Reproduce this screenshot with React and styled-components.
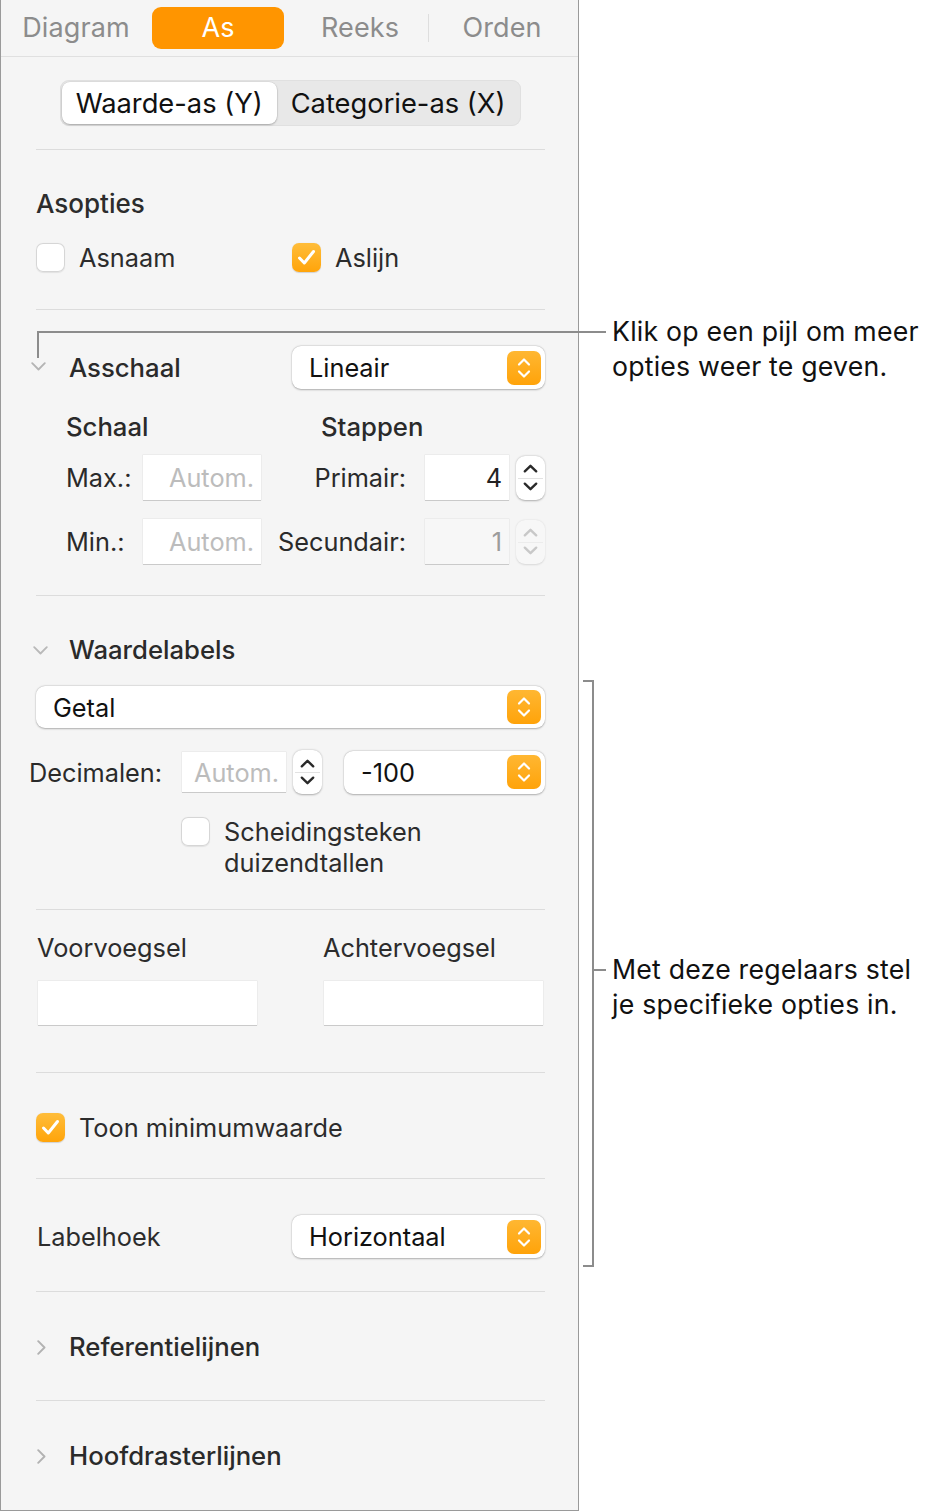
import React from "react";
import styled, { createGlobalStyle } from "styled-components";

const Global = createGlobalStyle`
  html, body { margin: 0; padding: 0; background: #ffffff; }
  body { font-family: Inter, "Noto Sans", "Liberation Sans", sans-serif; -webkit-font-smoothing: antialiased; }
  * { box-sizing: border-box; }
`;

const Page = styled.div`
  position: relative;
  width: 935px;
  height: 1511px;
  display: flex;
  align-items: flex-start;
`;

const Panel = styled.div`
  width: 579px;
  height: 1511px;
  background: #f5f5f5;
  border: 1.5px solid #9a9a9a;
  border-top: none;
  display: flex;
  flex-direction: column;
  color: #2a2a2a;
`;

const TabBar = styled.div`
  height: 57px;
  flex: none;
  display: grid;
  grid-template-columns: repeat(4, 1fr);
  padding: 0 5px 0 4px;
  border-bottom: 1px solid #e0e0e0;
  align-items: center;
`;

const Tab = styled.div`
  position: relative;
  height: 42px;
  margin: 0 5px 1px;
  border-radius: 9px;
  display: flex;
  align-items: center;
  justify-content: center;
  font-size: 27px;
  letter-spacing: 0.1px;
  color: ${(p) => (p.$active ? "#ffffff" : "#8c8c8c")};
  background: ${(p) => (p.$active ? "#ff9500" : "transparent")};
  ${(p) =>
    p.$sep &&
    `&::before { content: ""; position: absolute; left: -8px; top: 7px; bottom: 7px; width: 1px; background: #dedede; }`}
`;

const SegWrap = styled.div`
  display: flex;
  justify-content: center;
  padding: 23px 0 23px;
  border-bottom: 1px solid #dcdcdc;
  margin: 0 33px 0 35px;
`;

const Segmented = styled.div`
  display: flex;
  height: 46px;
  padding: 2px;
  border-radius: 9px;
  background: #e8e8e8;
  box-shadow: inset 0 0 0 1px #e0e0e0;
`;

const Segment = styled.div`
  display: flex;
  align-items: center;
  padding: 0 14px;
  border-radius: 8px;
  font-size: 27.3px;
  color: #111;
  background: ${(p) => (p.$active ? "#ffffff" : "transparent")};
  box-shadow: ${(p) => (p.$active ? "0 1px 2px rgba(0,0,0,0.25), 0 0 0 0.5px rgba(0,0,0,0.08)" : "none")};
`;

const Section = styled.div`
  margin: 0 33px 0 35px;
  padding: ${(p) => p.$pad || "36px 0 34px"};
  border-bottom: ${(p) => (p.$last ? "none" : "1px solid #dcdcdc")};
  display: flex;
  flex-direction: column;
  gap: ${(p) => p.$gap || "0px"};
`;

const Title = styled.div`
  font-size: 26px;
  line-height: 30px;
  font-weight: 500;
  color: #2c2c2c;
`;

const Row = styled.div`
  display: flex;
  align-items: center;
  justify-content: ${(p) => p.$justify || "flex-start"};
  min-height: ${(p) => p.$h || "30px"};
  margin-top: ${(p) => p.$mt || "0px"};
`;

const CheckGroup = styled.label`
  display: flex;
  align-items: ${(p) => (p.$top ? "flex-start" : "center")};
  gap: 14px;
  width: ${(p) => p.$w || "auto"};
  margin-left: ${(p) => p.$ml || "0px"};
  margin-top: ${(p) => p.$mt || "0px"};
  font-size: 25.3px;
  line-height: 31px;
  color: #2c2c2c;
`;

const Box = styled.span`
  flex: none;
  width: 29px;
  height: 29px;
  border-radius: 7px;
  display: flex;
  align-items: center;
  justify-content: center;
  margin-top: ${(p) => (p.$top ? "1px" : "0")};
  background: ${(p) => (p.$on ? "linear-gradient(#ffbd3a, #ffa40a)" : "#ffffff")};
  box-shadow: ${(p) =>
    p.$on ? "0 0.5px 1px rgba(0,0,0,0.15)" : "inset 0 0 0 1px #d6d6d6, 0 0.5px 1px rgba(0,0,0,0.08)"};
`;

const Chevron = styled.span`
  width: 33px;
  flex: none;
  display: flex;
  align-items: center;
  justify-content: flex-start;
  margin-left: ${(p) => p.$ml || "0px"};
  margin-right: ${(p) => p.$mr || "0px"};
`;

const Disclosure = styled.div`
  display: flex;
  align-items: center;
  font-size: 25.7px;
  line-height: 30px;
  font-weight: 500;
  color: #2a2a2a;
`;

const Popup = styled.div`
  width: ${(p) => p.$w || "100%"};
  height: ${(p) => p.$h || "43px"};
  border-radius: 9px;
  background: #ffffff;
  box-shadow: 0 0.5px 2px rgba(0, 0, 0, 0.28), 0 0 0 0.5px rgba(0, 0, 0, 0.05);
  display: flex;
  align-items: center;
  justify-content: space-between;
  padding: 0 4px 0 17px;
  font-size: 25.3px;
  color: #111;
`;

const PopupArrows = styled.span`
  width: 34px;
  height: 34px;
  border-radius: 7px;
  background: linear-gradient(#ffb732, #ffa30a);
  display: flex;
  align-items: center;
  justify-content: center;
`;

const ScaleGrid = styled.div`
  display: grid;
  grid-template-columns: 77px 118px 1fr 84px 36px;
  align-items: center;
  padding-left: 30px;
  row-gap: ${(p) => p.$rg || "19px"};
  margin-top: ${(p) => p.$mt || "0px"};
`;

const SubHead = styled.div`
  font-size: 25.7px;
  line-height: 30px;
  font-weight: 500;
  color: #2a2a2a;
  grid-column: ${(p) => p.$col};
  padding-left: ${(p) => p.$pl || "0px"};
`;

const FieldLabel = styled.div`
  font-size: 25.3px;
  color: #2a2a2a;
  text-align: ${(p) => (p.$right ? "right" : "left")};
  padding-right: ${(p) => (p.$right ? "19px" : "0")};
  white-space: nowrap;
`;

const Field = styled.div`
  height: ${(p) => p.$h || "45px"};
  width: ${(p) => p.$w || "auto"};
  background: ${(p) => (p.$disabled ? "#f7f7f7" : "#ffffff")};
  box-shadow: 0 1px 0 rgba(0,0,0,0.14), 0 0 0 0.5px rgba(0,0,0,0.07);
  display: flex;
  align-items: center;
  justify-content: flex-end;
  padding-right: 7px;
  font-size: 25.3px;
  color: ${(p) => (p.$placeholder ? "#bcbcbc" : p.$disabled ? "#9c9c9c" : "#222")};
  margin-left: ${(p) => p.$ml || "0px"};
`;

const Stepper = styled.div`
  justify-self: end;
  width: 29px;
  height: 44px;
  border-radius: 9px;
  background: ${(p) => (p.$disabled ? "#f7f7f7" : "#ffffff")};
  box-shadow: 0 0.5px 2px rgba(0, 0, 0, ${(p) => (p.$disabled ? "0.12" : "0.3")});
  display: flex;
  flex-direction: column;
  align-items: center;
  justify-content: space-evenly;
  position: relative;
  &::after {
    content: "";
    position: absolute;
    left: 2px;
    right: 2px;
    top: 50%;
    height: 1px;
    background: ${(p) => (p.$disabled ? "#ececec" : "#e2e2e2")};
  }
`;

const DecRow = styled.div`
  display: grid;
  grid-template-columns: 153px 104px 6px 30px 22px 1fr;
  align-items: center;
  margin-left: -7px;
  margin-top: 1px;
`;

const AffixGrid = styled.div`
  display: grid;
  grid-template-columns: 287px 1fr;
  row-gap: 18px;
  align-items: center;
`;

const PlainLabel = styled.div`
  font-size: 25.3px;
  line-height: 30px;
  color: #2c2c2c;
  padding-left: ${(p) => p.$pl || "1px"};
`;

const Note = styled.div`
  position: absolute;
  left: 612px;
  top: ${(p) => p.$top}px;
  font-family: Inter, "Liberation Sans", sans-serif;
  font-size: 26.7px;
  line-height: 35px;
  color: #111;
  letter-spacing: 0.2px;
`;

const Line = styled.div`
  position: absolute;
  background: #8c8c8c;
  left: ${(p) => p.$l}px;
  top: ${(p) => p.$t}px;
  width: ${(p) => p.$w}px;
  height: ${(p) => p.$h}px;
`;

const Marker = styled.div`
  position: absolute;
  left: ${(p) => p.$l}px;
  top: ${(p) => p.$t}px;
  display: flex;
  line-height: 0;
`;

const ChevDown = ({ color = "#b9b9b9" }) => (
  <svg width="15" height="9" viewBox="0 0 15 9" style={{ display: "block" }}>
    <path d="M1.2 1.2 L7.5 7.5 L13.8 1.2" fill="none" stroke={color} strokeWidth="1.8" strokeLinecap="round" strokeLinejoin="round" />
  </svg>
);

const ChevRight = () => (
  <svg width="9" height="15" viewBox="0 0 9 15" style={{ display: "block" }}>
    <path d="M1.2 1.2 L7.5 7.5 L1.2 13.8" fill="none" stroke="#b2b2b2" strokeWidth="1.9" strokeLinecap="round" strokeLinejoin="round" />
  </svg>
);

const Check = () => (
  <svg width="19" height="17" viewBox="0 0 19 17">
    <path d="M2.5 9 L7.3 14 L16.5 2.5" fill="none" stroke="#fff" strokeWidth="3" strokeLinecap="round" strokeLinejoin="round" />
  </svg>
);

const UpDown = ({ color = "#fff", w = 14 }) => (
  <svg width={w} height="24" viewBox="0 0 14 24">
    <path d="M2 8.5 L7 3.5 L12 8.5" fill="none" stroke={color} strokeWidth="2.2" strokeLinecap="round" strokeLinejoin="round" />
    <path d="M2 15.5 L7 20.5 L12 15.5" fill="none" stroke={color} strokeWidth="2.2" strokeLinecap="round" strokeLinejoin="round" />
  </svg>
);

const StepUp = ({ color }) => (
  <svg width="15" height="9" viewBox="0 0 15 9">
    <path d="M1.8 7.3 L7.5 1.8 L13.2 7.3" fill="none" stroke={color} strokeWidth="2.4" strokeLinecap="round" strokeLinejoin="round" />
  </svg>
);
const StepDown = ({ color }) => (
  <svg width="15" height="9" viewBox="0 0 15 9">
    <path d="M1.8 1.7 L7.5 7.2 L13.2 1.7" fill="none" stroke={color} strokeWidth="2.4" strokeLinecap="round" strokeLinejoin="round" />
  </svg>
);

const NumStepper = ({ disabled }) => {
  const c = disabled ? "#c8c8c8" : "#2a2a2a";
  return (
    <Stepper $disabled={disabled}>
      <StepUp color={c} />
      <StepDown color={c} />
    </Stepper>
  );
};

const Select = ({ children, w, h }) => (
  <Popup $w={w} $h={h}>
    <span>{children}</span>
    <PopupArrows>
      <UpDown />
    </PopupArrows>
  </Popup>
);

export default function App() {
  return (
    <>
      <Global />
      <Page>
        <Panel>
          <TabBar>
            <Tab>Diagram</Tab>
            <Tab $active>As</Tab>
            <Tab>Reeks</Tab>
            <Tab $sep>Orden</Tab>
          </TabBar>

          <SegWrap>
            <Segmented>
              <Segment $active>Waarde-as (Y)</Segment>
              <Segment>Categorie-as (X)</Segment>
            </Segmented>
          </SegWrap>

          <Section $pad="39px 0 36px" $gap="23px">
            <Title>Asopties</Title>
            <Row>
              <CheckGroup $w="256px">
                <Box />
                Asnaam
              </CheckGroup>
              <CheckGroup>
                <Box $on>
                  <Check />
                </Box>
                Aslijn
              </CheckGroup>
            </Row>
          </Section>

          <Section $pad="36px 0 31px" $gap="23px">
            <Row $justify="space-between" $h="43px">
              <Disclosure>
                <Chevron />
                Asschaal
              </Disclosure>
              <Select w="253px">Lineair</Select>
            </Row>
            <ScaleGrid $rg="0px">
              <SubHead $col="1 / 3">Schaal</SubHead>
              <SubHead $col="3 / 6" $pl="60px">Stappen</SubHead>
            </ScaleGrid>
            <ScaleGrid $rg="19px" $mt="-10px">
              <FieldLabel>Max.:</FieldLabel>
              <Field $placeholder>Autom.</Field>
              <FieldLabel $right>Primair:</FieldLabel>
              <Field>4</Field>
              <NumStepper />
              <FieldLabel>Min.:</FieldLabel>
              <Field $placeholder>Autom.</Field>
              <FieldLabel $right>Secundair:</FieldLabel>
              <Field $disabled>1</Field>
              <NumStepper disabled />
            </ScaleGrid>
          </Section>

          <Section $pad="39px 0 31px" $gap="21px">
            <Disclosure>
              <Chevron $ml="-3px" $mr="3px">
                <ChevDown />
              </Chevron>
              Waardelabels
            </Disclosure>
            <Select h="42px">Getal</Select>
            <DecRow>
              <FieldLabel>Decimalen:</FieldLabel>
              <Field $h="40px" $placeholder>Autom.</Field>
              <span />
              <NumStepper />
              <span />
              <Select>-100</Select>
            </DecRow>
            <CheckGroup $top $ml="145px" $mt="1px">
              <Box $top />
              <span>
                Scheidingsteken
                <br />
                duizendtallen
              </span>
            </CheckGroup>
          </Section>

          <Section $pad="23px 0 47px">
            <AffixGrid>
              <PlainLabel>Voorvoegsel</PlainLabel>
              <PlainLabel $pl="0px">Achtervoegsel</PlainLabel>
              <Field $h="44px" $w="219px" $ml="2px" />
              <Field $h="44px" $w="219px" $ml="1px" />
            </AffixGrid>
          </Section>

          <Section $pad="39px 0 35px">
            <Row>
              <CheckGroup>
                <Box $on>
                  <Check />
                </Box>
                Toon minimumwaarde
              </CheckGroup>
            </Row>
          </Section>

          <Section $pad="36px 0 33px">
            <Row $justify="space-between" $h="43px">
              <PlainLabel>Labelhoek</PlainLabel>
              <Select w="253px">Horizontaal</Select>
            </Row>
          </Section>

          <Section $pad="40px 0 38px">
            <Disclosure>
              <Chevron $ml="1px" $mr="-1px">
                <ChevRight />
              </Chevron>
              Referentielijnen
            </Disclosure>
          </Section>

          <Section $pad="40px 0 38px" $last>
            <Disclosure>
              <Chevron $ml="1px" $mr="-1px">
                <ChevRight />
              </Chevron>
              Hoofdrasterlijnen
            </Disclosure>
          </Section>
        </Panel>

        {/* callout to the disclosure arrow */}
        <Line $l={37} $t={331} $w={569} $h={2} />
        <Line $l={37} $t={331} $w={2} $h={27} />
        <Marker $l={31} $t={362}>
          <ChevDown color="#b4b4b4" />
        </Marker>
        <Note $top={314}>
          Klik op een pijl om meer
          <br />
          opties weer te geven.
        </Note>

        {/* bracket for specific controls */}
        <Line $l={583} $t={680} $w={11} $h={2} />
        <Line $l={592} $t={680} $w={2} $h={587} />
        <Line $l={583} $t={1265} $w={11} $h={2} />
        <Line $l={592} $t={969} $w={14} $h={2} />
        <Note $top={952}>
          Met deze regelaars stel
          <br />
          je specifieke opties in.
        </Note>
      </Page>
    </>
  );
}
